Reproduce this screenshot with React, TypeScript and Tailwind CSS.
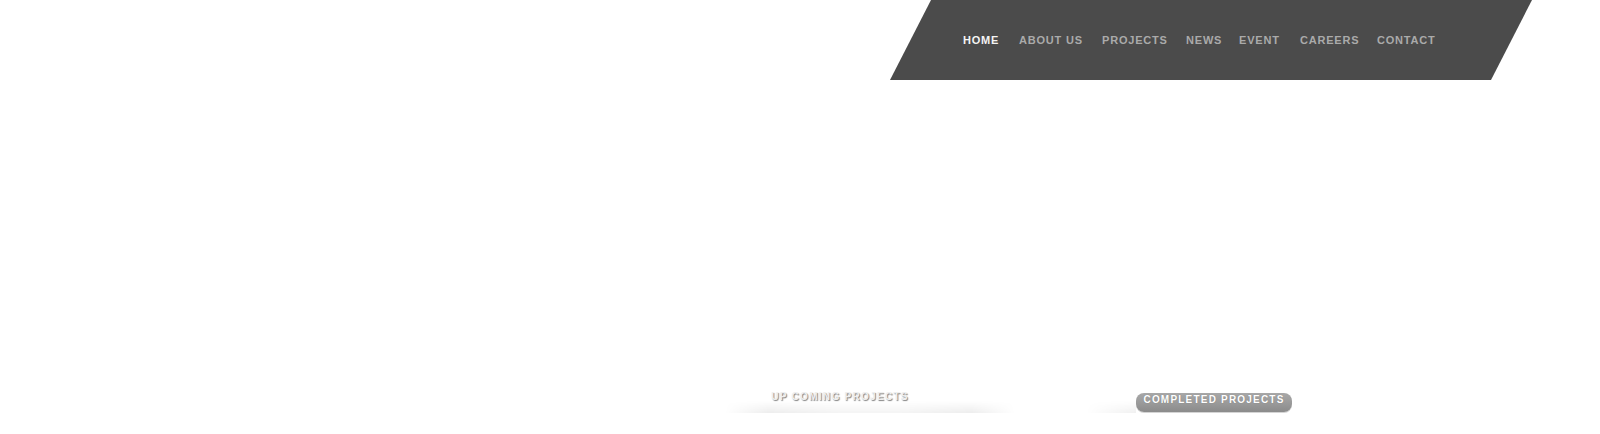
import React from "react";

const items: { label: string; w: string; active?: boolean }[] = [
  { label: "HOME", w: "w-[56px]", active: true },
  { label: "ABOUT US", w: "w-[83px]" },
  { label: "PROJECTS", w: "w-[84px]" },
  { label: "NEWS", w: "w-[53px]" },
  { label: "EVENT", w: "w-[61px]" },
  { label: "CAREERS", w: "w-[77px]" },
  { label: "CONTACT", w: "w-[70px]" },
];

export default function App() {
  return (
    <div
      className="w-[1600px] h-[434px] bg-white flex flex-col overflow-hidden"
      style={{ fontFamily: '"Liberation Sans", Arial, sans-serif' }}
    >
      <header className="h-[80px] flex shrink-0">
        <nav className="ml-[890px] w-[642px] h-[80px] bg-[#4b4b4b] [clip-path:polygon(41px_0,100%_0,calc(100%-41px)_100%,0_100%)] flex items-center pl-[73px]">
          {items.map((it) => (
            <a
              key={it.label}
              className={`${it.w} shrink-0 text-[11px] font-bold leading-none tracking-[0.8px] whitespace-nowrap ${
                it.active ? "text-[#f4f4f4]" : "text-[#aaaaaa]"
              }`}
            >
              {it.label}
            </a>
          ))}
        </nav>
      </header>
      <div className="flex-1" />
      <div className="h-[49px] shrink-0 flex items-start">
        <div className="ml-[725px] w-[290px] flex flex-col">
          <div className="h-[12px] mt-[6px] w-[230px] flex items-center justify-center">
            <span className="text-[10px] font-bold leading-none tracking-[1.3px] text-[#efefef] [text-shadow:1px_1px_1px_rgba(0,0,0,0.5)]">
              UP COMING PROJECTS
            </span>
          </div>
          <div className="h-[12px] -mt-[2px] bg-[linear-gradient(to_bottom,rgba(0,0,0,0),rgba(0,0,0,0.07))] [mask-image:linear-gradient(to_right,transparent,black_15%,rgba(0,0,0,0.6)_40%,rgba(0,0,0,0.6)_60%,black_85%,transparent)]" />
        </div>
        <div className="ml-[71px] flex items-start">
          <div className="w-[50px] h-[12px] mt-[16px] bg-[linear-gradient(to_bottom,rgba(0,0,0,0),rgba(0,0,0,0.06))] [mask-image:linear-gradient(to_right,transparent,black)]" />
          <div className="w-[156px] h-[19px] mt-[8px] rounded-[8px] bg-[linear-gradient(to_bottom,#a8a8a8,#999999_55%,#8b8b8b)] shadow-[0_1px_0_#d4d4d4] flex items-start justify-center pt-[1px]">
            <span className="text-[10px] font-bold leading-[11px] tracking-[1.2px] text-white [text-shadow:0_0_1px_rgba(0,0,0,0.25)]">
              COMPLETED PROJECTS
            </span>
          </div>
        </div>
      </div>
    </div>
  );
}
